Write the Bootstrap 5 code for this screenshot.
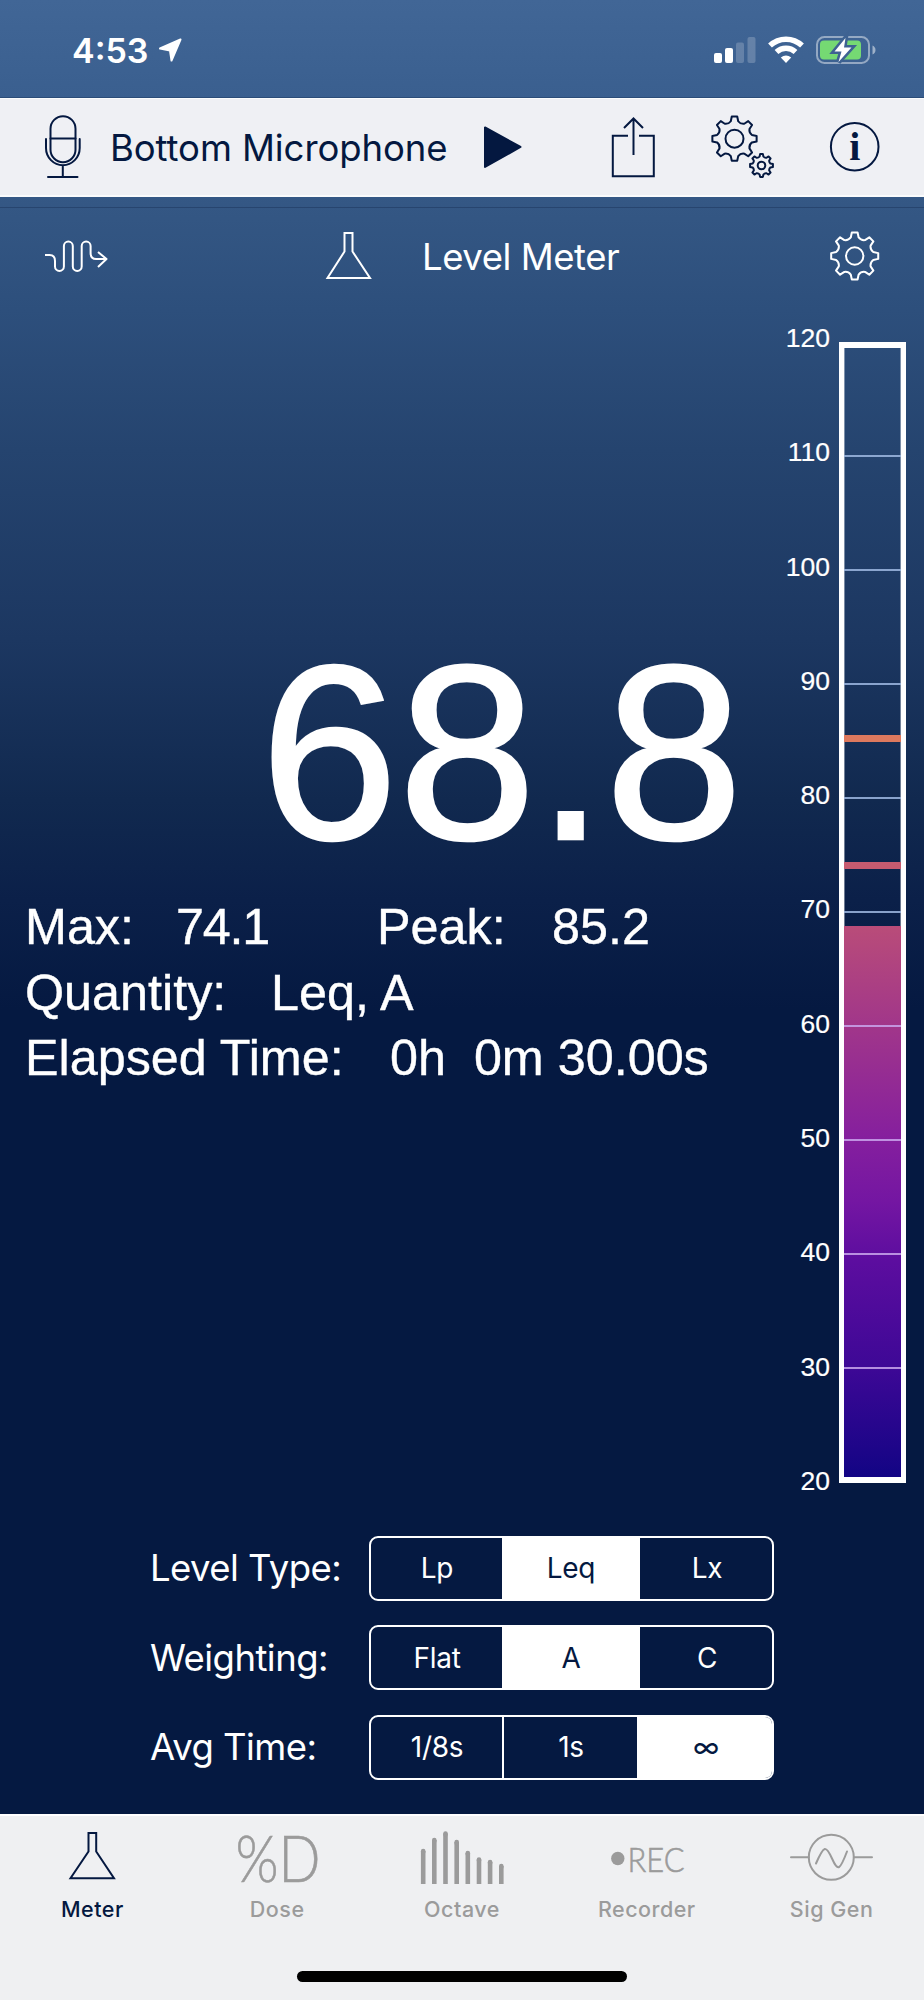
<!DOCTYPE html>
<html lang="en">
<head>
<meta charset="utf-8">
<meta name="viewport" content="width=device-width, initial-scale=1">
<title>Level Meter</title>
<link href="https://cdn.jsdelivr.net/npm/bootstrap@5.3.0/dist/css/bootstrap.min.css" rel="stylesheet">
<style>
:root{--navy:#041840;--ui:Inter,"Liberation Sans",sans-serif;--helv:"Liberation Sans",Arial,sans-serif}
body{width:924px;height:2000px;overflow:hidden;font-family:var(--ui);color:#fff;
 background:linear-gradient(180deg,#416696 0,#3a5f8f 98px,#345784 205px,#2d4f7c 310px,#25446f 450px,#1c3761 640px,#11294f 800px,#0b2049 900px,#051941 1010px,#051941 100%)}
svg{display:block;flex:none;overflow:visible;fill:none;stroke:currentColor;stroke-width:2}
svg text{stroke:none;fill:currentColor}
.statusbar{height:98px;padding:3px 45px 0 72px;border-bottom:1px solid #2b4c78}
.clock{font-size:34px;font-weight:600;line-height:34px;width:86px;margin-top:1px;white-space:nowrap}
.toolbar{height:99px;padding-left:43px;background:#eff0f4;color:var(--navy);border-top:1px solid #fafbfc;border-bottom:2px solid #fafbfc}
.source{font-size:36.5px;line-height:44px;width:372px;margin:1px 0 0 28px;white-space:nowrap;letter-spacing:-.08px}
.strip{height:11px;border-bottom:1px solid #27456f}
.subbar{height:98px;padding:0 0 2px 43px}
.heading{font-size:36.5px;line-height:44px;width:407px;margin:1px 0 0 49px;white-space:nowrap;letter-spacing:-.45px}
.work{height:1229px}
.reading{font:248px/248px var(--helv);height:248px;margin-top:323px;padding-right:9px;-webkit-text-stroke:2.5px #fff}
.reading span{display:block;transform:scaleY(1.004);transform-origin:50% 84.65%}
.details{font:50.3px/65.6px var(--helv);margin-top:17px;padding-left:25px;white-space:nowrap;-webkit-text-stroke:.4px #fff}
.details span{display:inline-block}
.scale-labels{width:78px;font:26.5px/30px var(--helv);margin-top:17px;height:1173px;-webkit-text-stroke:.2px #fff}
.gauge{width:67px;height:1141px;border:5px solid #fff;border-width:6px 5px;margin:35.500px 0 0 9px;position:relative;
 box-shadow:inset 1px 0 #ffffff66,inset -1px 0 #ffffff66}
.gauge div{position:absolute;left:0;right:0}
.tick{height:2px;background:#9fb8e2;opacity:.85}
.over{background:#c9a6ec}
.held{height:7px}
.level{bottom:0;background:linear-gradient(180deg,#b94c79 0,#a1368a 100px,#851f9e 213px,#7416a2 275px,#5c0d9f 335px,#3e0896 440px,#120484 552px)}
.setting{width:640px;height:66px;margin-left:150px}
.setting-name{width:219px;font-size:36.5px;line-height:44px;white-space:nowrap;letter-spacing:-.55px}
.segments{width:405px;height:65px;border:2px solid #fff;border-radius:9px;overflow:hidden}
.segments .btn{font-size:28px;line-height:34px;color:#fff;border:0;border-radius:0;padding:0;flex:0 0 132px;letter-spacing:-.3px}
.segments .btn.mid{flex-basis:138px}
.segments .btn.mid.ruled{flex-basis:136px;border-left:2px solid #fff}
.segments .btn.last{flex:1 1 0;padding-left:3px}
.segments .btn.active{background:#fff;color:var(--navy)}
.tabs{height:186px;background:#eff0f2;border-top:2px solid #fff;color:#9b9b9b;position:relative;z-index:1}
.tab{width:20%;font-size:21.5px;line-height:26px;font-weight:500;letter-spacing:.5px}
.tab svg{margin-bottom:6px}
.tab.current{color:var(--navy)}
.tab .thin{font-family:Lato,sans-serif;font-weight:300;letter-spacing:0;stroke:currentColor;stroke-width:.6}
.homebar{width:330px;height:11px;border-radius:6px;background:#000}
</style>
</head>
<body class="m-0 d-flex flex-column">
<header class="statusbar d-flex align-items-center flex-shrink-0">
 <div class="clock">4:53</div>
 <svg width="24" height="24" viewBox="0 0 24 24" style="fill:currentColor" stroke-linejoin="round"><path d="M22.500 1.500 2 10.500 12 12.500 13.500 22.500Z"/></svg>
 <div class="d-flex ms-auto align-items-center">
  <svg width="54" height="28" viewBox="0 0 54 28" style="stroke:none;fill:#fff"><rect y="17" width="8" height="10" rx="2"/><rect x="11" y="12" width="8" height="15" rx="2"/><g opacity=".2"><rect x="22" y="6.500" width="8" height="20.500" rx="2"/><rect x="33.500" y="1" width="8" height="26" rx="2"/></g></svg>
  <svg width="36" height="28" viewBox="0 0 36 28" style="stroke-width:5.500"><path d="M2 9.500C11 1 25 1 34 9.500M8.500 16C14 11 22 11 27.500 16"/><path d="M12.800 21.500Q18 17.500 23.200 21.500L18 27Z" style="stroke:none;fill:#fff"/></svg>
  <svg class="ms-2" width="67" height="28" viewBox="-4 0 67 28"><rect x="1" y="1" width="52" height="26" rx="7.500" opacity=".45"/><path d="M56.500 9.500q3 1.500 3 4.500t-3 4.500z" style="stroke:none;fill:#fff" opacity=".5"/><rect x="4" y="4.500" width="41" height="19" rx="4" style="stroke:none;fill:#75d973"/><path d="M29.500 2 18.500 15.500h7L22.500 26 35.500 11.500h-7.500Z" style="stroke:#3e6292;stroke-width:5;fill:#fff;paint-order:stroke"/></svg>
 </div>
</header>
<nav class="toolbar d-flex align-items-center flex-shrink-0">
 <svg width="39" height="64" viewBox="43 115 39 64" stroke-linecap="round"><rect x="50.500" y="116.200" width="25" height="46" rx="12.500"/><path d="M50.500 138.500h25M46 139v9a16.700 17 0 0 0 33.700 0v-9M62.800 165.500V177M48 177h29.500"/></svg>
 <div class="source">Bottom Microphone</div>
 <svg width="40" height="44" viewBox="482 125 40 44" style="fill:currentColor" stroke-linejoin="round"><path d="M485 127.500v39.500L520.500 147Z"/></svg>
 <svg style="margin-left:88px" width="46" height="64" viewBox="610 115 46 64"><path d="M628 135.700h-15.200v40.600h41v-40.600H639M633.500 155v-36.500M624 128l9.500-9.500 9.500 9.500"/></svg>
 <svg style="margin-left:54px" width="66" height="66" viewBox="710 114 66 66" stroke-linejoin="round"><path class="cog" data-x="734.500" data-y="138.700" data-r="22.300"/><circle cx="734.500" cy="138.700" r="9"/><path class="cog" data-x="761.500" data-y="165.500" data-r="11.500"/><circle cx="761.500" cy="165.500" r="3.800"/></svg>
 <svg style="margin-left:53px" width="52" height="52" viewBox="829 121 52 52"><circle cx="854.700" cy="146.700" r="23.800"/><text x="854.700" y="160" text-anchor="middle" font-family="Liberation Serif, serif" font-weight="bold" font-size="40">i</text></svg>
</nav>
<div class="strip flex-shrink-0"></div>
<div class="subbar d-flex align-items-center flex-shrink-0">
 <svg width="66" height="36" viewBox="43 238 66 36" stroke-linejoin="round"><path d="M45 255h4.500q5.500 0 5.500 6v5.500a4.400 4.400 0 0 0 8.900 0v-20.500a4.400 4.400 0 0 1 8.900 0v20.500a4.400 4.400 0 0 0 8.900 0v-20.500a4.400 4.400 0 0 1 8.900 0v7q0 6 5.500 6H106M98 252l8.500 7-8.500 8"/></svg>
 <svg style="margin-left:214px" width="50" height="50" viewBox="323 230 50 50"><path d="M344.500 232h8v18.500L370 277h-42.500L344.500 250.500Z"/></svg>
 <div class="heading">Level Meter</div>
 <svg width="52" height="52" viewBox="829 230 52 52" stroke-linejoin="round"><path class="cog" data-x="854.700" data-y="256" data-r="23.700"/><circle cx="854.700" cy="256" r="8.700"/></svg>
</div>
<main class="work d-flex flex-shrink-0">
 <section style="width:752px" class="flex-shrink-0">
  <div class="reading text-end"><span>68.8</span></div>
  <div class="details">
   <div><span style="width:151px">Max:</span><span style="width:201px;letter-spacing:-1.2px">74.1</span><span style="width:175px">Peak:</span><span>85.2</span></div>
   <div><span style="width:246px">Quantity:</span><span>Leq, A</span></div>
   <div><span style="width:365px">Elapsed Time:</span><span>0h&nbsp; 0m 30.00s</span></div>
  </div>
 </section>
 <div class="scale-labels d-flex flex-column justify-content-between text-end flex-shrink-0"><span>120</span><span>110</span><span>100</span><span>90</span><span>80</span><span>70</span><span>60</span><span>50</span><span>40</span><span>30</span><span>20</span></div>
 <div class="gauge flex-shrink-0">
  <div class="level" style="height:551px"></div>
  <div class="tick" style="top:107px"></div><div class="tick" style="top:221px"></div><div class="tick" style="top:335px"></div><div class="tick" style="top:449px"></div><div class="tick" style="top:563px"></div>
  <div class="tick over" style="top:677px"></div><div class="tick over" style="top:791px"></div><div class="tick over" style="top:905px"></div><div class="tick over" style="top:1019px"></div>
  <div class="held" style="top:387px;background:#dd795e"></div><div class="held" style="top:514px;background:#c75b70"></div>
 </div>
</main>
<section class="d-flex flex-column flex-shrink-0" style="gap:23.500px;height:279px">
 <div class="setting d-flex align-items-center"><div class="setting-name">Level Type:</div><div class="segments btn-group"><button class="btn">Lp</button><button class="btn mid active">Leq</button><button class="btn last">Lx</button></div></div>
 <div class="setting d-flex align-items-center"><div class="setting-name">Weighting:</div><div class="segments btn-group"><button class="btn">Flat</button><button class="btn mid active">A</button><button class="btn last">C</button></div></div>
 <div class="setting d-flex align-items-center"><div class="setting-name">Avg Time:</div><div class="segments btn-group"><button class="btn">1/8s</button><button class="btn mid ruled">1s</button><button class="btn last active">∞</button></div></div>
</section>
<footer class="tabs d-flex flex-column align-items-center flex-shrink-0">
 <div class="d-flex w-100" style="height:155px;padding-top:12px">
  <div class="tab current d-flex flex-column align-items-center"><svg width="50" height="62" viewBox="67.500 1828 50 62"><path d="M89 1833h7.700v18.500L114.500 1878.300h-43.500L89 1851.500Z"/></svg>Meter</div>
  <div class="tab d-flex flex-column align-items-center"><svg width="80" height="62" viewBox="237.500 1828 80 62"><text class="thin" x="236" y="1881.500" font-size="66" textLength="85" lengthAdjust="spacingAndGlyphs">%D</text></svg>Dose</div>
  <div class="tab d-flex flex-column align-items-center"><svg width="84" height="62" viewBox="420.500 1828 84 62" style="stroke-width:4.600"><path d="M423.700 1884v-33M434.800 1884v-44M446 1884v-50.500M457.200 1884v-42M468.300 1884v-31M479.500 1884v-24.500M490.600 1884v-22M501.800 1884v-18"/><path stroke-linecap="round" d="M423.700 1851v1M434.800 1840v1M446 1833.500v1M457.200 1842v1M468.300 1853v1M479.500 1859.500v1M490.600 1862v1M501.800 1866v1"/></svg>Octave</div>
  <div class="tab d-flex flex-column align-items-center"><svg width="74" height="62" viewBox="609.500 1828 74 62"><circle cx="617.300" cy="1858.500" r="6.700" style="stroke:none;fill:currentColor"/><text class="thin" x="627" y="1872" font-size="33" textLength="57" lengthAdjust="spacingAndGlyphs">REC</text></svg>Recorder</div>
  <div class="tab d-flex flex-column align-items-center"><svg width="84" height="62" viewBox="790 1828 84 62" stroke-linecap="round"><circle cx="831.300" cy="1857.300" r="22.500"/><path d="M791 1857.300h17.800M853.800 1857.300H872M816 1863.500C824 1845 826 1845 832 1858.500S840 1870 847 1851.500"/></svg>Sig Gen</div>
 </div>
 <div class="homebar"></div>
</footer>
<script src="https://cdn.jsdelivr.net/npm/bootstrap@5.3.0/dist/js/bootstrap.bundle.min.js"></script>
<script>
// Outline of an eight-toothed cog wheel
document.querySelectorAll('.cog').forEach(function (el) {
  var x = +el.dataset.x, y = +el.dataset.y, r = +el.dataset.r, d = '';
  function at(rad, deg) {
    var a = (deg - 90) * Math.PI / 180;
    return (x + rad * Math.cos(a)).toFixed(2) + ' ' + (y + rad * Math.sin(a)).toFixed(2);
  }
  for (var i = 0; i < 8; i++) {
    var t = i * 45;
    d += (i ? 'L' : 'M') + at(r, t - 7) + 'L' + at(r, t + 7) + 'L' + at(r * .8, t + 12) + 'Q' + at(r * .7, t + 22.5) + ' ' + at(r * .8, t + 33);
  }
  el.setAttribute('d', d + 'Z');
});
</script>
</body>
</html>
